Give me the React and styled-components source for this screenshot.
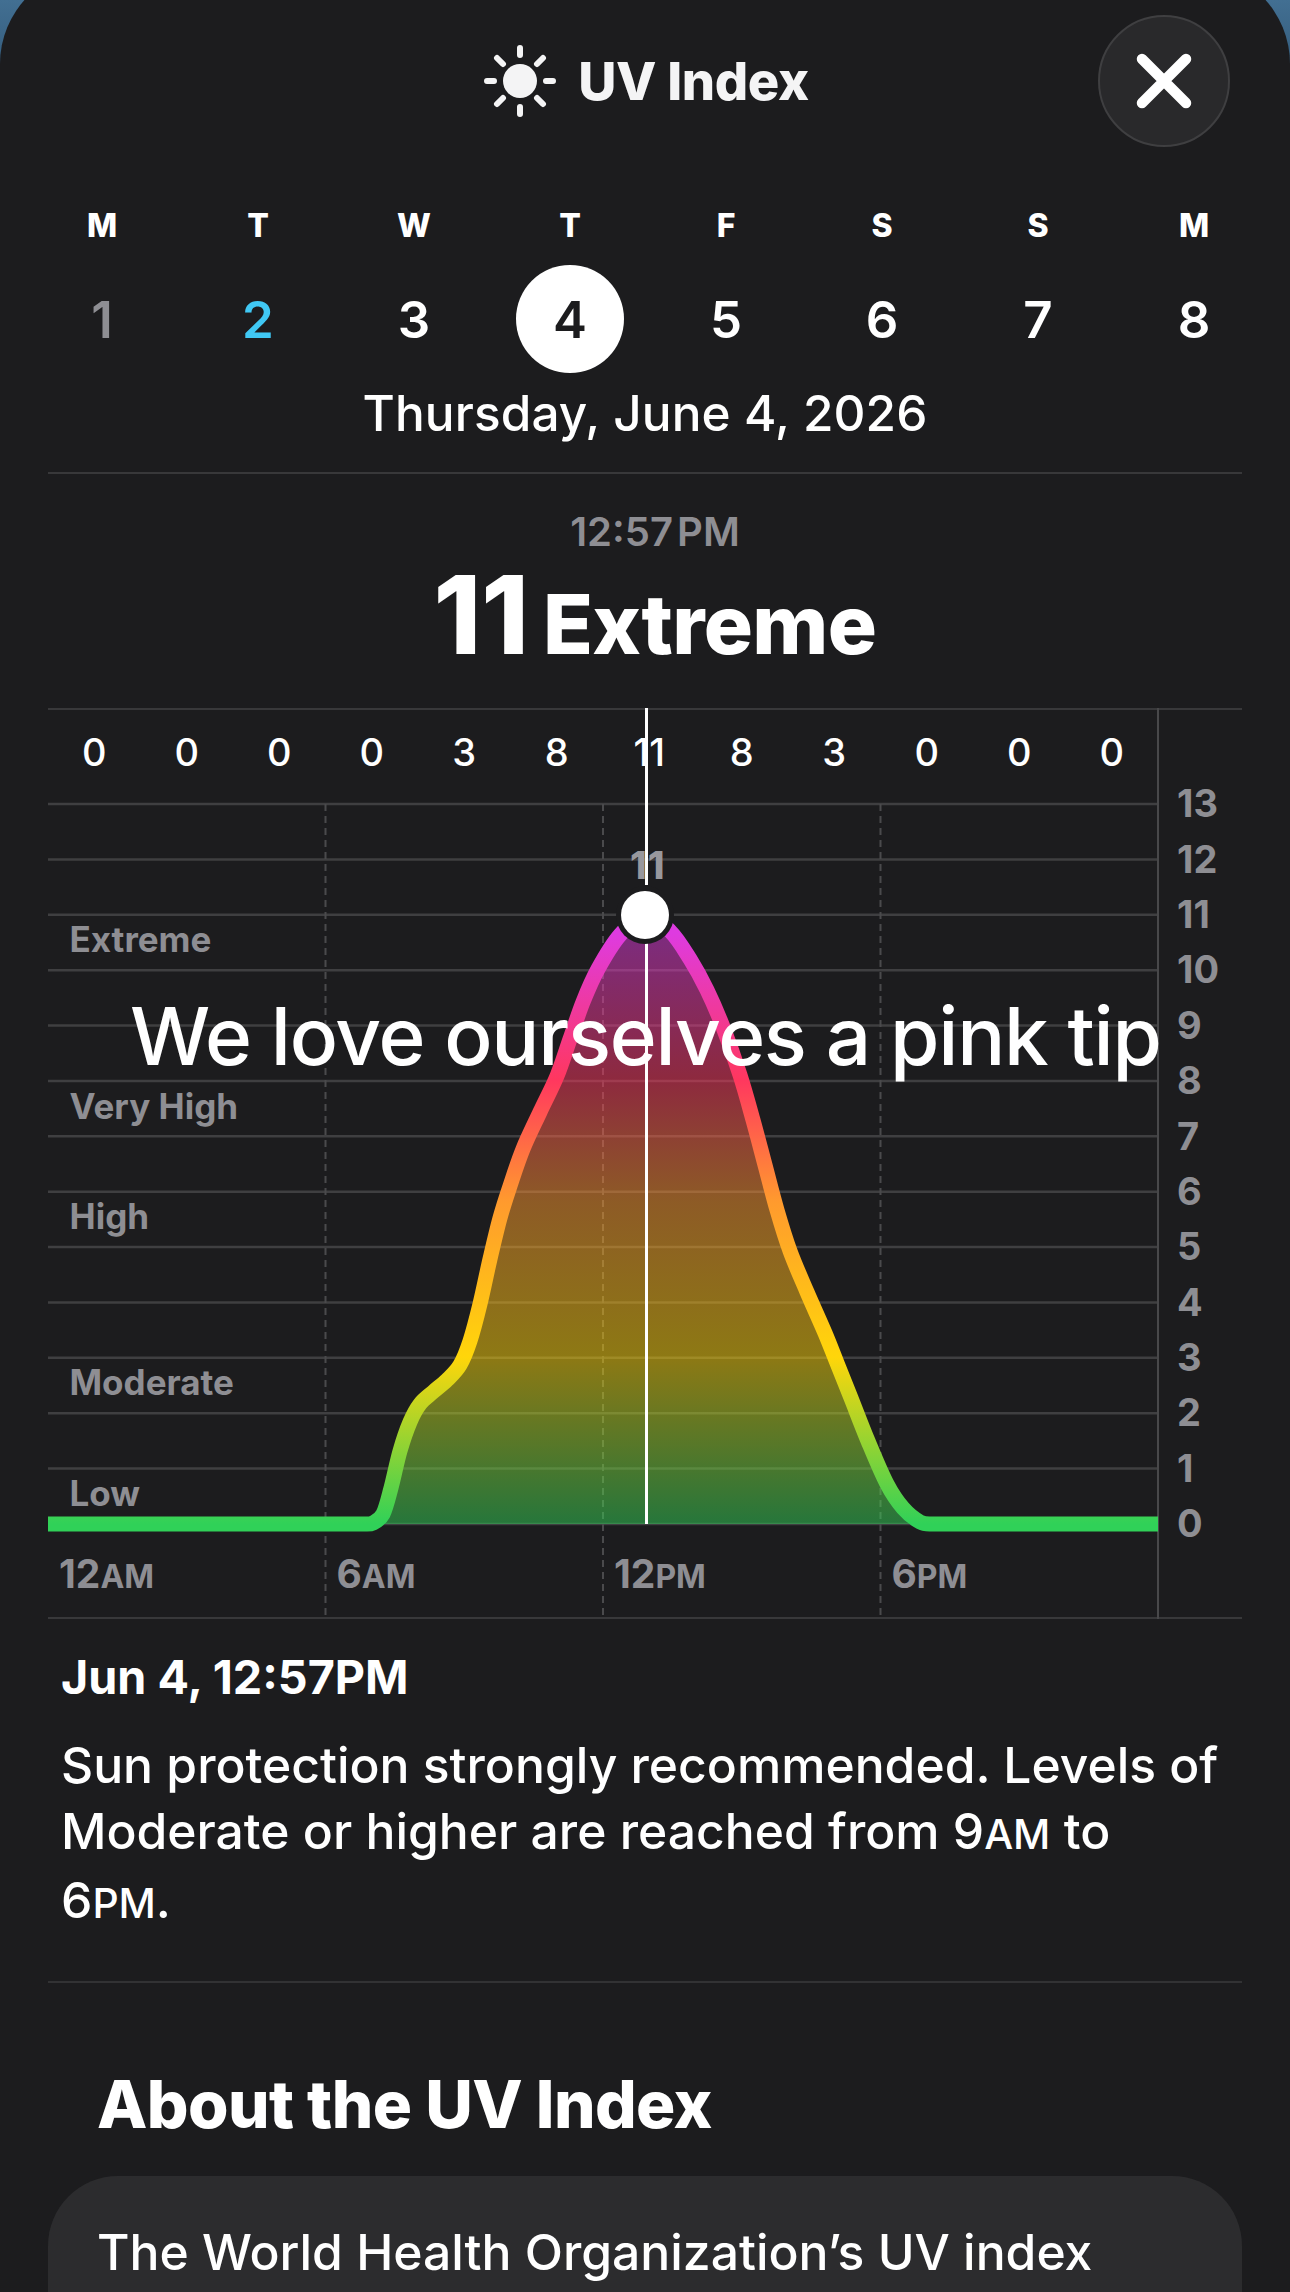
import React from "react";
import styled, { createGlobalStyle } from "styled-components";

const W = 1194;
const TOP = 96;
const STEP = 720 / 13;
const PLOT_W = 1110;
const ZERO = 816;
const PEAK_Y = 207;

const GlobalStyle = createGlobalStyle`
  html, body {
    margin: 0;
    padding: 0;
    background: #1c1c1e;
    font-family: "Inter", "Liberation Sans", sans-serif;
  }
`;

const Page = styled.div`
  width: 1290px;
  height: 2292px;
  overflow: hidden;
  background: linear-gradient(180deg, #426f92 0, #2c5170 110px);
`;

const Sheet = styled.div`
  height: 2324px;
  background: #1c1c1e;
  border-radius: 96px 96px 0 0;
  margin-top: -32px;
  padding: 32px 48px 0;
  box-sizing: border-box;
  color: #fff;
`;

const Header = styled.header`
  position: relative;
  height: 162px;
  margin-bottom: 39px;
  display: flex;
  align-items: center;
  justify-content: center;
  gap: 22px;
  padding-left: 3px;
`;

const Title = styled.h1`
  margin: 0;
  font-size: 52.5px;
  font-weight: 800;
  letter-spacing: -0.4px;
  color: #f4f4f5;
`;

const CloseButton = styled.button`
  position: absolute;
  right: 12px;
  top: 15px;
  width: 132px;
  height: 132px;
  padding: 0;
  display: flex;
  align-items: center;
  justify-content: center;
  border-radius: 50%;
  border: 2px solid #3f3f41;
  background: #29292b;
  box-sizing: border-box;
`;

const WeekGrid = styled.div`
  display: grid;
  grid-template-columns: repeat(8, 156px);
  margin: 0 0 0 -24px;
  width: 1248px;
  justify-items: center;
`;

const DayLetter = styled.div`
  font-size: 32px;
  font-weight: 800;
  line-height: 36px;
  height: 40px;
  padding-top: 7px;
`;

const DayNumber = styled.div`
  width: 108px;
  height: 108px;
  margin-top: 17px;
  display: flex;
  align-items: center;
  justify-content: center;
  border-radius: 50%;
  font-size: 51px;
  font-weight: 600;
  color: ${(p) => p.$color};
  background: ${(p) => (p.$selected ? "#fff" : "transparent")};
`;

const DateLine = styled.div`
  text-align: center;
  font-size: 49.5px;
  font-weight: 500;
  line-height: 58px;
  margin-top: 11px;
  letter-spacing: 0.1px;
`;

const Divider = styled.hr`
  border: none;
  border-top: 2px solid ${(p) => p.$color};
  margin: ${(p) => p.$top}px 0 0;
`;

const Summary = styled.div`
  display: flex;
  flex-direction: column;
  align-items: center;
  padding: 36px 0 0 20px;
`;

const TimeLabel = styled.div`
  font-size: 40px;
  font-weight: 600;
  line-height: 44px;
  word-spacing: -6px;
  color: #8e8e93;
`;

const Reading = styled.div`
  display: flex;
  align-items: baseline;
  gap: 14px;
  height: 148px;
  padding-top: 6px;
`;

const ReadingValue = styled.span`
  font-size: 108px;
  font-weight: 800;
  line-height: 110px;
`;

const ReadingLabel = styled.span`
  font-size: 82px;
  font-weight: 800;
  letter-spacing: -0.6px;
`;

const Chart = styled.div`
  position: relative;
  width: ${W}px;
  height: 911px;
  display: grid;
  grid-template-columns: ${PLOT_W}px 1fr;
  grid-template-rows: ${TOP - 2}px 720px 1fr;
  border-top: 2px solid #38383a;
  border-bottom: 2px solid #38383a;
  box-sizing: border-box;
`;

const ChartArt = styled.svg`
  position: absolute;
  left: 0;
  top: -2px;
`;

const HourValues = styled.div`
  grid-column: 1;
  grid-row: 1;
  position: relative;
  display: grid;
  grid-template-columns: repeat(12, 92.5px);
  justify-items: center;
  align-items: center;
  padding-bottom: 10px;
`;

const HourValue = styled.span`
  font-size: 38px;
  font-weight: 500;
`;

const Bands = styled.div`
  grid-column: 1;
  grid-row: 2;
  position: relative;
  display: grid;
  grid-template-rows: repeat(13, ${STEP}px);
  padding-left: 21.5px;
`;

const BandLabel = styled.span`
  grid-row: ${(p) => p.$row};
  align-self: center;
  margin-bottom: 6px;
  font-size: 35px;
  font-weight: 700;
  color: #8e8e93;
`;

const Scale = styled.div`
  grid-column: 2;
  grid-row: 2;
  position: relative;
  display: flex;
  flex-direction: column;
  margin-top: -${STEP / 2}px;
  padding-left: 19px;
`;

const ScaleValue = styled.span`
  height: ${STEP}px;
  line-height: ${STEP}px;
  flex: none;
  font-size: 38px;
  font-weight: 700;
  color: #8e8e93;
`;

const HourAxis = styled.div`
  grid-column: 1;
  grid-row: 3;
  position: relative;
  display: grid;
  grid-template-columns: repeat(4, 277.5px);
  padding-top: 30px;
  padding-left: 11px;
  margin-right: -11px;
`;

const HourLabel = styled.span`
  font-size: 39px;
  font-weight: 700;
  line-height: 40px;
  color: #8e8e93;
`;

const Small = styled.span`
  font-size: 0.82em;
`;

const PeakValue = styled.span`
  position: absolute;
  left: 582px;
  top: 132px;
  font-size: 38px;
  font-weight: 800;
  letter-spacing: 1px;
  color: #98989d;
`;

const Caption = styled.div`
  position: absolute;
  left: 82px;
  top: 277px;
  font-size: 80px;
  font-weight: 500;
  line-height: 98px;
  letter-spacing: -1.25px;
  white-space: nowrap;
  color: #fff;
`;

const Notes = styled.section`
  padding: 34px 14px 0 13px;
  height: 362px;
  box-sizing: border-box;
`;

const NoteTitle = styled.div`
  font-size: 46.7px;
  font-weight: 700;
  line-height: 48px;
`;

const NoteBody = styled.p`
  margin: 31px 0 0;
  font-size: 49.8px;
  font-weight: 500;
  line-height: 66px;
`;

const AboutTitle = styled.h2`
  margin: 84px 0 0 49px;
  font-size: 65.5px;
  font-weight: 800;
  line-height: 76px;
  letter-spacing: -0.6px;
`;

const AboutCard = styled.div`
  margin-top: 33px;
  height: 200px;
  padding: 43px 49px;
  background: #2c2c2e;
  border-radius: 70px 70px 0 0;
  box-sizing: border-box;
  font-size: 49.8px;
  font-weight: 500;
  line-height: 66px;
`;

const days = [
  ["M", "1", "#8e8e93"],
  ["T", "2", "#40c8f4"],
  ["W", "3", "#fff"],
  ["T", "4", "#1c1c1e"],
  ["F", "5", "#fff"],
  ["S", "6", "#fff"],
  ["S", "7", "#fff"],
  ["M", "8", "#fff"],
];

const hourly = [0, 0, 0, 0, 3, 8, 11, 8, 3, 0, 0, 0];
const bands = [
  ["Extreme", 3],
  ["Very High", 6],
  ["High", 8],
  ["Moderate", 11],
  ["Low", 13],
];

// measured on the page, shifted to chart coordinates below
const curve = [
  [364, 1524], [373, 1523], [383, 1514], [391, 1488], [400, 1451], [410, 1422], [420, 1404],
  [433, 1392], [447, 1380], [460, 1365], [470, 1341], [480, 1304], [490, 1259], [500, 1218],
  [510, 1186], [523, 1149], [540, 1112], [557, 1076], [570, 1039], [583, 1002], [598, 969],
  [620, 935], [645, 915], [670, 931], [690, 959], [707, 990], [723, 1027], [740, 1075],
  [753, 1120], [765, 1165], [777, 1210], [790, 1251], [807, 1292], [825, 1333], [837, 1363],
  [851, 1398], [868, 1441], [887, 1484], [903, 1508], [920, 1522], [932, 1524],
].map(([x, y]) => [x - 48, y - 708]);

const smooth = (pts) => {
  let d = "";
  for (let i = 0; i < pts.length - 1; i++) {
    const p0 = pts[i - 1] || pts[i];
    const p1 = pts[i];
    const p2 = pts[i + 1];
    const p3 = pts[i + 2] || p2;
    const c1 = [p1[0] + (p2[0] - p0[0]) / 6, p1[1] + (p2[1] - p0[1]) / 6];
    const c2 = [p2[0] - (p3[0] - p1[0]) / 6, p2[1] - (p3[1] - p1[1]) / 6];
    d += ` C ${c1[0]} ${c1[1]} ${c2[0]} ${c2[1]} ${p2[0]} ${p2[1]}`;
  }
  return d;
};

const first = curve[0];
const strokePath = `M 0 ${ZERO} L ${first[0]} ${first[1]}${smooth(curve)} L ${PLOT_W} ${ZERO}`;
const fillPath = `M ${first[0]} ${first[1]}${smooth(curve)} Z`;

const SunIcon = () => (
  <svg width="72" height="72" viewBox="0 0 72 72" fill="none">
    <circle cx="36" cy="36" r="17" fill="#f4f4f5" />
    <g stroke="#f4f4f5" strokeWidth="6" strokeLinecap="round">
      <path d="M36 3v7M36 62v7M3 36h7M62 36h7" />
      <path d="M13 13l6 6M53 53l6 6M13 59l6-6M53 19l6-6" />
    </g>
  </svg>
);

const CloseIcon = () => (
  <svg width="64" height="64" viewBox="0 0 64 64" fill="none">
    <path d="M10 10L54 54M54 10L10 54" stroke="#fff" strokeWidth="10.500" strokeLinecap="round" />
  </svg>
);

const ChartDrawing = () => {
  const lines = [];
  for (let i = 0; i <= 13; i++) lines.push(TOP + i * STEP);
  return (
    <ChartArt width={W} height="911" viewBox={`0 0 ${W} 911`} fill="none">
      <defs>
        <linearGradient id="uv" gradientUnits="userSpaceOnUse" x1="0" y1={ZERO} x2="0" y2={PEAK_Y}>
          <stop offset="0" stopColor="#30d158" />
          <stop offset="0.274" stopColor="#ffd60a" />
          <stop offset="0.53" stopColor="#ff9a2e" />
          <stop offset="0.73" stopColor="#ff375f" />
          <stop offset="0.97" stopColor="#de3be0" />
          <stop offset="1" stopColor="#de3be0" />
        </linearGradient>
      </defs>
      {lines.map((y) => (
        <line key={y} x1="0" x2={PLOT_W} y1={y} y2={y} stroke="#3f3f41" strokeWidth="2.500" />
      ))}
      {[277.5, 555, 832.5].map((x) => (
        <line key={x} x1={x} x2={x} y1={TOP} y2="911" stroke="#4a4a4c" strokeWidth="2" strokeDasharray="7 5" />
      ))}
      <line x1={PLOT_W} x2={PLOT_W} y1="0" y2="911" stroke="#48484a" strokeWidth="2" />
      <path d={fillPath} fill="url(#uv)" opacity="0.5" />
      <path d={strokePath} stroke="url(#uv)" strokeWidth="15" strokeLinejoin="round" />
      <line x1="598.500" x2="598.500" y1="0" y2="177" stroke="#fff" strokeWidth="3" />
      <line x1="598.500" x2="598.500" y1={PEAK_Y} y2={ZERO} stroke="#fff" strokeWidth="3" />
      <circle cx="597" cy={PEAK_Y} r="29" fill="#1c1c1e" />
      <circle cx="597" cy={PEAK_Y} r="24" fill="#fff" />
    </ChartArt>
  );
};

export default function App() {
  return (
    <Page>
      <GlobalStyle />
      <Sheet>
        <Header>
          <SunIcon />
          <Title>UV Index</Title>
          <CloseButton aria-label="Close">
            <CloseIcon />
          </CloseButton>
        </Header>
        <WeekGrid>
          {days.map(([letter], i) => (
            <DayLetter key={i}>{letter}</DayLetter>
          ))}
          {days.map(([, num, color]) => (
            <DayNumber key={num} $color={color} $selected={num === "4"}>
              {num}
            </DayNumber>
          ))}
        </WeekGrid>
        <DateLine>Thursday, June 4, 2026</DateLine>
        <Divider $color="#38383a" $top={30} />
        <Summary>
          <TimeLabel>12:57 PM</TimeLabel>
          <Reading>
            <ReadingValue>11</ReadingValue>
            <ReadingLabel>Extreme</ReadingLabel>
          </Reading>
        </Summary>
        <Chart>
          <ChartDrawing />
          <HourValues>
            {hourly.map((v, i) => (
              <HourValue key={i}>{v}</HourValue>
            ))}
          </HourValues>
          <Bands>
            {bands.map(([name, row]) => (
              <BandLabel key={name} $row={row}>
                {name}
              </BandLabel>
            ))}
          </Bands>
          <Scale>
            {[13, 12, 11, 10, 9, 8, 7, 6, 5, 4, 3, 2, 1, 0].map((n) => (
              <ScaleValue key={n}>{n}</ScaleValue>
            ))}
          </Scale>
          <HourAxis>
            <HourLabel>12<Small>AM</Small></HourLabel>
            <HourLabel>6<Small>AM</Small></HourLabel>
            <HourLabel>12<Small>PM</Small></HourLabel>
            <HourLabel>6<Small>PM</Small></HourLabel>
          </HourAxis>
          <PeakValue>11</PeakValue>
          <Caption>We love ourselves a pink tip</Caption>
        </Chart>
        <Notes>
          <NoteTitle>Jun 4, 12:57PM</NoteTitle>
          <NoteBody>
            Sun protection strongly recommended. Levels of Moderate or higher are reached from 9<Small>AM</Small> to 6<Small>PM</Small>.
          </NoteBody>
        </Notes>
        <Divider $color="#323234" $top={0} />
        <AboutTitle>About the UV Index</AboutTitle>
        <AboutCard>The World Health Organization’s UV index</AboutCard>
      </Sheet>
    </Page>
  );
}
